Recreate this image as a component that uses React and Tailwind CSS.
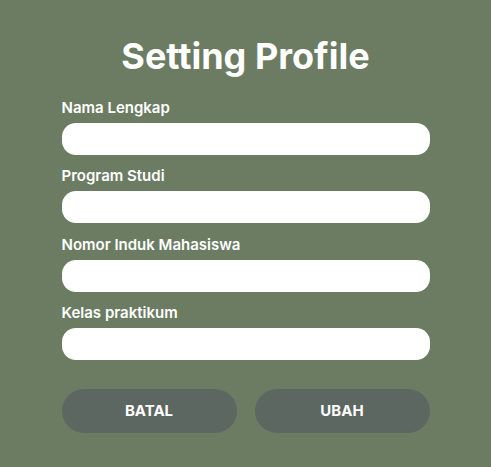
import React from "react";

const fields = [
  "Nama Lengkap",
  "Program Studi",
  "Nomor Induk Mahasiswa",
  "Kelas praktikum",
];

export default function App() {
  return (
    <div
      className="min-h-[467px] w-full bg-[#6b7c63] pt-[36px]"
      style={{ fontFamily: "Inter, 'Noto Sans', sans-serif" }}
    >
      <div className="mx-auto flex w-[368px] flex-col">
        <h1 className="text-center text-[36px] font-bold leading-[40px] text-white">
          Setting Profile
        </h1>

        <form className="mt-[22px] flex flex-col gap-[11.4px]">
          {fields.map((label) => (
            <div key={label} className="flex flex-col gap-[5px]">
              <label className="text-[15px] font-semibold leading-[20px] text-white">
                {label}
              </label>
              <input
                type="text"
                className="h-[32px] w-full rounded-[14px] bg-white px-3 text-sm outline-none"
              />
            </div>
          ))}
        </form>

        <div className="mt-[29px] flex gap-[18px]">
          <button className="h-[44px] flex-1 rounded-full bg-[#5d6762] text-[15px] font-bold text-white">
            BATAL
          </button>
          <button className="h-[44px] flex-1 rounded-full bg-[#5d6762] text-[15px] font-bold text-white">
            UBAH
          </button>
        </div>
      </div>
    </div>
  );
}
